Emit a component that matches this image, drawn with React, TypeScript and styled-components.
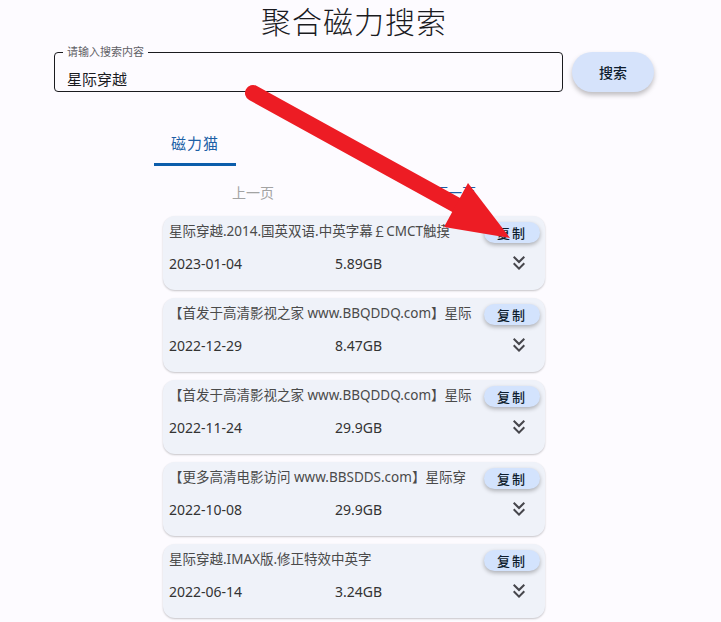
import React from 'react';
import styled, { createGlobalStyle } from 'styled-components';

const GlobalStyle = createGlobalStyle`
  body {
    margin: 0;
    background: #fdfbff;
    font-family: "Noto Sans", "Noto Sans CJK SC", sans-serif;
  }
`

const Page = styled.div`
  position: relative;
  width: 721px;
  min-height: 622px;
  overflow: hidden;
`

const Column = styled.div`
  width: 600px;
  margin-left: 54px;
  display: flex;
  flex-direction: column;
`

const Title = styled.h1`
  margin: 0;
  text-align: center;
  font-size: 30px;
  font-weight: 300;
  line-height: 44px;
  color: #1b1b1f;
  letter-spacing: 1px;
`

const SearchRow = styled.div`
  display: flex;
  gap: 9px;
  margin-top: 8px;
`

const Field = styled.div`
  position: relative;
  flex: 1;
  height: 40px;
  box-sizing: border-box;
  border: 1px solid #1b1b1f;
  border-radius: 4px;
`

const FieldLabel = styled.span`
  position: absolute;
  top: -8px;
  left: 8px;
  padding: 0 4px;
  background: #fdfbff;
  font-size: 11px;
  line-height: 14px;
  color: #5f5f66;
`

const Input = styled.input`
  display: block;
  width: 100%;
  box-sizing: border-box;
  margin-top: 15px;
  height: 20px;
  padding: 0 12px;
  border: none;
  outline: none;
  background: transparent;
  font-family: inherit;
  font-size: 15px;
  font-weight: 400;
  color: #1b1b1f;
`

const SearchButton = styled.button`
  width: 82px;
  height: 40px;
  border: none;
  border-radius: 20px;
  background: #d6e3fb;
  box-shadow: 0 3px 5px rgba(0, 0, 0, 0.25);
  font-family: inherit;
  font-size: 14px;
  font-weight: 500;
  color: #0e1d2e;
`

const TabBar = styled.div`
  width: 400px;
  margin: 26px auto 0;
  display: flex;
`

const Tab = styled.div`
  width: 82px;
  height: 48px;
  box-sizing: border-box;
  padding-top: 4px;
  display: flex;
  align-items: center;
  justify-content: center;
  border-bottom: 3px solid #0b5dab;
  color: #1c5fa6;
  font-size: 15px;
  letter-spacing: 1px;
`

const Pager = styled.div`
  width: 404px;
  margin: 8px auto 0;
  height: 36px;
  display: grid;
  grid-template-columns: 1fr 1fr;
`

const PageButton = styled.div<{ $disabled?: boolean }>`
  display: flex;
  align-items: center;
  justify-content: center;
  font-size: 14px;
  color: ${p => (p.$disabled ? '#a3a3a3' : '#1c5fa6')};
`

const CardList = styled.div`
  width: 382px;
  margin: 6px auto 0;
  display: flex;
  flex-direction: column;
  gap: 8px;
`

const Card = styled.div`
  height: 74px;
  box-sizing: border-box;
  padding: 6px 5px 0 6px;
  border-radius: 12px;
  background: #eff2f9;
  box-shadow: 0 1px 2px rgba(0, 0, 0, 0.22);
`

const CardTop = styled.div`
  display: flex;
  align-items: flex-start;
  gap: 8px;
`

const CardTitle = styled.div`
  flex: 1;
  min-width: 0;
  white-space: nowrap;
  overflow: hidden;
  font-size: 13.5px;
  line-height: 19px;
  color: #4a4a4a;
`

const CopyButton = styled.button`
  flex: none;
  width: 56px;
  height: 21px;
  padding: 0;
  border: none;
  border-radius: 11px;
  background: #d3e3fd;
  box-shadow: 0 2px 4px rgba(0, 0, 0, 0.28);
  font-family: inherit;
  font-size: 13px;
  font-weight: 500;
  letter-spacing: 2px;
  color: #0e1d2e;
`

const CardBottom = styled.div`
  display: flex;
  align-items: center;
  height: 24px;
  margin-top: 8px;
  font-size: 14px;
  color: #333;
`

const DateText = styled.span`
  width: 166px;
`

const ExpandIcon = styled.svg`
  margin-left: auto;
  margin-right: 9px;
  width: 24px;
  height: 24px;
  fill: #46464c;
`

const Overlay = styled.svg`
  position: absolute;
  left: 0;
  top: 0;
  pointer-events: none;
`

const results = [
  { title: '星际穿越.2014.国英双语.中英字幕￡CMCT触摸', date: '2023-01-04', size: '5.89GB' },
  { title: '【首发于高清影视之家 www.BBQDDQ.com】星际', date: '2022-12-29', size: '8.47GB' },
  { title: '【首发于高清影视之家 www.BBQDDQ.com】星际', date: '2022-11-24', size: '29.9GB' },
  { title: '【更多高清电影访问 www.BBSDDS.com】星际穿', date: '2022-10-08', size: '29.9GB' },
  { title: '星际穿越.IMAX版.修正特效中英字', date: '2022-06-14', size: '3.24GB' },
]

function App() {
  return (
    <Page>
      <GlobalStyle />
      <Column>
        <Title>聚合磁力搜索</Title>
        <SearchRow>
          <Field>
            <FieldLabel>请输入搜索内容</FieldLabel>
            <Input defaultValue="星际穿越" />
          </Field>
          <SearchButton>搜索</SearchButton>
        </SearchRow>
        <TabBar>
          <Tab>磁力猫</Tab>
        </TabBar>
        <Pager>
          <PageButton $disabled>上一页</PageButton>
          <PageButton>下一页</PageButton>
        </Pager>
        <CardList>
          {results.map(r => (
            <Card key={r.date + r.size}>
              <CardTop>
                <CardTitle>{r.title}</CardTitle>
                <CopyButton>复制</CopyButton>
              </CardTop>
              <CardBottom>
                <DateText>{r.date}</DateText>
                <span>{r.size}</span>
                <ExpandIcon viewBox="0 0 24 24">
                  <path d="M18 6.41 16.59 5 12 9.58 7.41 5 6 6.41l6 6z" />
                  <path d="M18 13l-1.41-1.41L12 16.17l-4.59-4.58L6 13l6 6z" />
                </ExpandIcon>
              </CardBottom>
            </Card>
          ))}
        </CardList>
      </Column>
      <Overlay width="721" height="622" viewBox="0 0 721 622">
        <line x1="253" y1="93" x2="458" y2="206" stroke="#ed1c24" strokeWidth="16" strokeLinecap="round" />
        <polygon points="468,183 510,238 444,227" fill="#ed1c24" />
      </Overlay>
    </Page>
  )
}

export default App;
